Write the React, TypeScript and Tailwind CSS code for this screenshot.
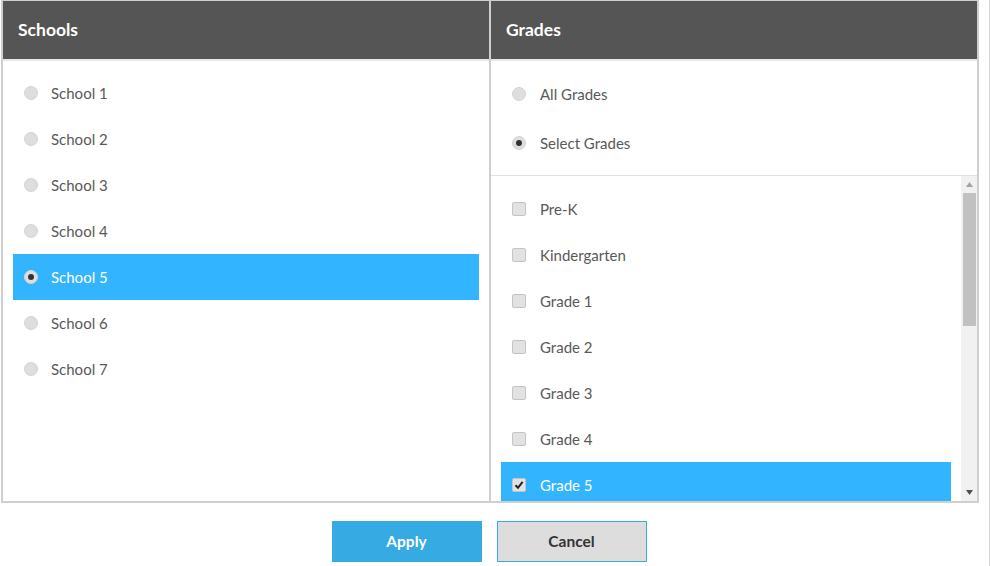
import React from "react";

const font = { fontFamily: '"Source Sans Pro", Lato, "Liberation Sans", sans-serif' };

function Radio({ checked }: { checked?: boolean }) {
  return (
    <span className="relative flex h-[14px] w-[14px] shrink-0 items-center justify-center rounded-full border border-[#d4d4d4] bg-[#dedede]">
      {checked && <span className="h-[6px] w-[6px] rounded-full bg-[#333]" />}
    </span>
  );
}

function Checkbox({ checked }: { checked?: boolean }) {
  return (
    <span className="flex h-[14px] w-[14px] shrink-0 items-center justify-center rounded-[2px] border border-[#c4c4c4] bg-[#e2e2e2]">
      {checked && (
        <svg width="10" height="10" viewBox="0 0 10 10">
          <path d="M1.5 5.2 L4 7.8 L8.6 1.8" stroke="#222" strokeWidth="2" fill="none" />
        </svg>
      )}
    </span>
  );
}

const schools = ["School 1", "School 2", "School 3", "School 4", "School 5", "School 6", "School 7"];
const grades = ["Pre-K", "Kindergarten", "Grade 1", "Grade 2", "Grade 3", "Grade 4", "Grade 5"];

export default function App() {
  return (
    <div className="relative h-[566px] w-[991px] overflow-hidden bg-white" style={font}>
      <div className="absolute right-[1px] top-0 h-full w-[1px] bg-[#d6d6d6]" />
      <div className="ml-[1px] flex w-[978px] flex-col">
        <div className="flex h-[503px] border-x-2 border-b-2 border-t border-[#cfcfcf]">
          {/* Schools */}
          <div className="flex w-[486px] flex-col">
            <div className="flex h-[60px] items-center border-b-2 border-[#e8e8e8] bg-[#555555] pl-[15px] text-[17.5px] font-bold text-white">
              Schools
            </div>
            <div className="flex flex-col px-[10px] pt-[9px]">
              {schools.map((s, i) => {
                const sel = i === 4;
                return (
                  <div
                    key={s}
                    className={`flex h-[46px] items-center gap-[13px] pl-[11px] text-[15px] ${sel ? "bg-[#33b4ff] text-white" : "text-[#595959]"}`}
                  >
                    <Radio checked={sel} />
                    <span>{s}</span>
                  </div>
                );
              })}
            </div>
          </div>
          <div className="w-[2px] bg-[#cfcfcf]" />
          {/* Grades */}
          <div className="flex min-h-0 flex-1 flex-col">
            <div className="flex h-[60px] shrink-0 items-center border-b-2 border-[#e8e8e8] bg-[#555555] pl-[15px] text-[17.5px] font-bold text-white">
              Grades
            </div>
            <div className="flex h-[115px] shrink-0 flex-col border-b border-[#e0e0e0] pl-[21px] pt-[9px] text-[15px] text-[#595959]">
              <div className="flex h-[48px] items-center gap-[14px]">
                <Radio />
                <span>All Grades</span>
              </div>
              <div className="flex h-[50px] items-center gap-[14px]">
                <Radio checked />
                <span>Select Grades</span>
              </div>
            </div>
            <div className="flex min-h-0 flex-1">
              <div className="flex min-w-0 flex-1 flex-col overflow-hidden px-[10px] pt-[10px]">
                {grades.map((g, i) => {
                  const sel = i === 6;
                  return (
                    <div
                      key={g}
                      className={`flex h-[46px] shrink-0 items-center gap-[14px] pl-[11px] text-[15px] ${sel ? "bg-[#33b4ff] text-white" : "text-[#595959]"}`}
                    >
                      <Checkbox checked={sel} />
                      <span>{g}</span>
                    </div>
                  );
                })}
              </div>
              <div className="flex w-[16px] shrink-0 flex-col items-center bg-[#f1f1f1]">
                <div className="flex h-[17px] w-full items-center justify-center">
                  <svg width="7" height="5" viewBox="0 0 7 5">
                    <path d="M3.5 0 L7 5 L0 5 Z" fill="#a3a3a3" />
                  </svg>
                </div>
                <div className="h-[133px] w-[13px] bg-[#c1c1c1]" />
                <div className="flex-1" />
                <div className="flex h-[17px] w-full items-center justify-center">
                  <svg width="7" height="5" viewBox="0 0 7 5">
                    <path d="M0 0 L7 0 L3.5 5 Z" fill="#505050" />
                  </svg>
                </div>
              </div>
            </div>
          </div>
        </div>
        <div className="mt-[18px] flex justify-center gap-[15px] pr-[2px]">
          <button className="h-[41px] w-[150px] bg-[#36aae2] text-[15.5px] font-bold text-white">Apply</button>
          <button className="h-[41px] w-[150px] border border-[#3aa9e0] bg-[#dddddd] text-[15.5px] font-bold text-[#333]">
            Cancel
          </button>
        </div>
      </div>
    </div>
  );
}
